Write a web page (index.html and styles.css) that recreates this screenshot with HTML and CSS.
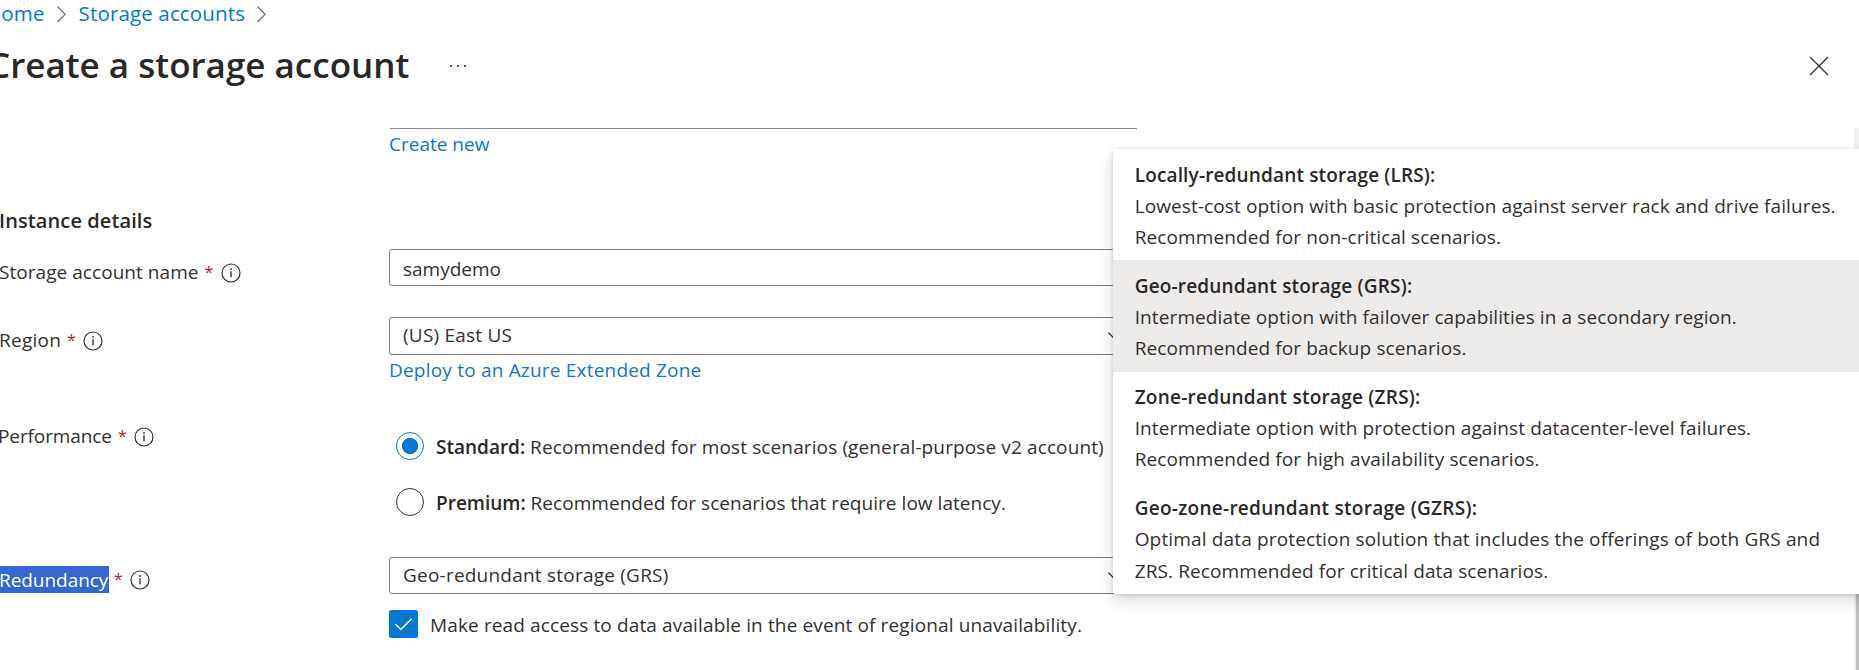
FILE: index.html
```
<!DOCTYPE html>
<html lang="en">
<head>
<meta charset="utf-8">
<title>Create a storage account</title>
<link rel="stylesheet" href="styles.css">
</head>
<body>
<svg class="defs" aria-hidden="true">
  <symbol id="info" viewBox="0 0 20 20"><circle cx="10" cy="10" r="9" fill="none" stroke="currentColor" stroke-width="1.2"/><path d="M10 8.2V14.2" stroke="currentColor" stroke-width="1.4"/><circle cx="10" cy="6" r=".9" fill="currentColor"/></symbol>
  <symbol id="sep" viewBox="0 0 9 17"><path d="M.6.6 8 8.3.6 16" fill="none" stroke="currentColor" stroke-width="1.1"/></symbol>
  <symbol id="down" viewBox="0 0 14 8"><path d="M.5.8 7 7.2 13.5.8" fill="none" stroke="currentColor" stroke-width="1.2"/></symbol>
</svg>
<div class="page">
  <header class="header">
    <nav class="crumbs">
      <a class="crumb home">Home</a>
      <svg class="sep"><use href="#sep"/></svg>
      <a class="crumb">Storage accounts</a>
      <svg class="sep"><use href="#sep"/></svg>
    </nav>
    <div class="title-row">
      <h1 class="title">Create a storage account</h1>
      <svg class="more" viewBox="0 0 18 4"><circle cx="2" cy="2" r="1.1"/><circle cx="9" cy="2" r="1.1"/><circle cx="16" cy="2" r="1.1"/></svg>
      <svg class="close" viewBox="0 0 20 20"><path d="M1 1 19 19M19 1 1 19"/></svg>
    </div>
  </header>
  <main class="form">
    <div class="row row-group"><div class="group-end"><a class="link">Create new</a></div></div>
    <h2 class="section">Instance details</h2>
    <div class="row row-name">
      <div class="label"><span class="label-text wide">Storage account name</span><span class="req">*</span><svg class="info"><use href="#info"/></svg></div>
      <div class="box input">samydemo</div>
    </div>
    <div class="row row-region">
      <div class="label"><span class="label-text region">Region</span><span class="req">*</span><svg class="info"><use href="#info"/></svg></div>
      <div class="field">
        <div class="box select"><span>(US) East US</span><svg class="down"><use href="#down"/></svg></div>
        <a class="link deploy">Deploy to an Azure Extended Zone</a>
      </div>
    </div>
    <div class="row row-perf">
      <div class="label"><span class="label-text perf">Performance</span><span class="req">*</span><svg class="info"><use href="#info"/></svg></div>
      <div class="radios">
        <div class="radio"><span class="dot on"></span><span class="radio-text"><b>Standard:</b> <span class="standard">Recommended for most scenarios (general-purpose v2 account)</span></span></div>
        <div class="radio"><span class="dot"></span><span class="radio-text"><b>Premium:</b> <span class="premium">Recommended for scenarios that require low latency.</span></span></div>
      </div>
    </div>
    <div class="row row-red">
      <div class="label"><span class="label-text selected">Redundancy</span><span class="req">*</span><svg class="info"><use href="#info"/></svg></div>
      <div class="field">
        <div class="box select short"><span>Geo-redundant storage (GRS)</span><svg class="down"><use href="#down"/></svg></div>
        <div class="check"><svg class="checkbox" viewBox="0 0 29 28"><rect width="29" height="28" rx="2.5"/><path d="M6.5 14.3 11.8 19.5 22.5 8.9"/></svg><span>Make read access to data available in the event of regional unavailability.</span></div>
      </div>
    </div>
  </main>
  <div class="scroll"><div class="thumb"></div></div>
  <div class="menu">
    <div class="item"><b class="t1">Locally-redundant storage (LRS):</b><span>Lowest-cost option with basic protection against server rack and drive failures.</span><span>Recommended for non-critical scenarios.</span></div>
    <div class="item active"><b class="t2">Geo-redundant storage (GRS):</b><span>Intermediate option with failover capabilities in a secondary region.</span><span>Recommended for backup scenarios.</span></div>
    <div class="item"><b class="t3">Zone-redundant storage (ZRS):</b><span>Intermediate option with protection against datacenter-level failures.</span><span>Recommended for high availability scenarios.</span></div>
    <div class="item"><b class="t4">Geo-zone-redundant storage (GZRS):</b><span class="optimal">Optimal data protection solution that includes the offerings of both GRS and</span><span>ZRS. Recommended for critical data scenarios.</span></div>
  </div>
</div>
</body>
</html>
```
FILE: styles.css
```
* { box-sizing: border-box; }
body { margin: 0; background: #fff; color: #323130; font: 19px/26px "Open Sans", "Noto Sans", sans-serif; }
b { font-weight: 600; color: #292827; }
.defs { position: absolute; width: 0; height: 0; }
.page { position: relative; height: 670px; overflow: hidden; }

.header { height: 128px; overflow: hidden; }
.crumbs { display: flex; align-items: center; height: 28px; color: #605e5c; }
.crumb { color: #0078d4; font-size: 20.5px; letter-spacing: .15px; line-height: 28px; margin-top: -2px; }
.home { margin-left: -14px; }
.sep { width: 9px; height: 17px; margin: 0 13px; }
.crumb + .sep { margin-left: 12px; }
.title-row { display: flex; align-items: center; height: 75px; padding-right: 30px; }
.title { margin: -2px 0 0 -12px; font-size: 35px; line-height: 48px; font-weight: 600; color: #292827; white-space: nowrap; }
.more { width: 18px; height: 4px; margin-left: 40px; fill: #323130; }
.close { width: 20px; height: 20px; margin-left: auto; stroke: #323130; stroke-width: 1.3; }

.form { display: flex; flex-direction: column; }
.row { display: grid; grid-template-columns: 389px 748px; align-items: start; white-space: nowrap; }
.row-group { height: 79px; }
.group-end { grid-column: 2; margin-left: 1px; border-top: 1px solid #8a8886; padding-top: 2px; }
.group-end .link { margin-left: -1px; }
.link { color: #1374d0; }
.section { margin: 0; height: 42px; padding-top: 1px; font-size: 20px; line-height: 26px; font-weight: 600; color: #292827; letter-spacing: .1px; margin-left: -1px; }
.row-name { height: 68px; }
.row-region { height: 106px; }
.row-perf { height: 134px; }
.row-red { height: 113px; }

.label { display: flex; align-items: center; margin-left: -1px; }
.row-name .label { padding-top: 10px; }
.row-region .label { padding-top: 10px; }
.row-red .label { padding-top: 8px; }
.wide { letter-spacing: .05px; }
.region { letter-spacing: .25px; }
.perf { margin-left: -1px; letter-spacing: -.1px; }
.req { color: #a4262c; width: 8px; margin-left: 6px; font-size: 16px; }
.info { width: 20px; height: 20px; margin: 1px 0 0 8px; }
.selected { background: #3367d1; color: #fff; line-height: 27px; width: 110px; overflow: visible; margin-right: -1px; padding-top: 1px; height: 27px; margin-top: 1px; letter-spacing: -.05px; }

.box { height: 37px; border: 1px solid #7f7d7b; border-radius: 3px; padding-left: 13px; line-height: 35px; }
.input { line-height: 38px; }
.select { display: flex; justify-content: space-between; height: 38px; line-height: 33px; letter-spacing: .22px; align-items: center; padding-right: 14px; }
.select span { margin-top: -2px; }
.short { height: 37px; }
.short span { margin-top: 0; }
.down { width: 14px; height: 8px; }
.deploy { display: block; letter-spacing: .2px; padding-top: 2px; }

.radios { padding: 9px 0 0 7px; }
.radio { display: flex; align-items: center; height: 28px; margin-bottom: 28px; }
.dot { width: 28px; height: 28px; border: 1px solid #323130; border-radius: 50%; }
.on { border-color: #0078d4; background: radial-gradient(circle, #0078d4 7.7px, #fff 8.5px); }
.radio-text { margin: 1px 0 0 12px; }
.standard { letter-spacing: .12px; }
.premium { letter-spacing: .04px; }
.check { display: flex; align-items: center; margin-top: 16px; gap: 12px; letter-spacing: .13px; }
.check span { padding-top: 2px; }
.checkbox { width: 29px; height: 28px; fill: #0078d4; }
.checkbox path { fill: none; stroke: #fff; stroke-width: 1.5; }

.scroll { position: absolute; right: 0; top: 128px; width: 5px; height: 542px; background: #f1f1f1; padding-left: 2px; }
.thumb { height: 442px; margin-top: 100px; background: #c1c1c1; }
.menu { position: absolute; left: 1113px; top: 149px; width: 760px; height: 445px; background: #fff; border-radius: 2px; box-shadow: 0 7px 16px rgba(0,0,0,.15), 0 1px 4px rgba(0,0,0,.13); }
.item { display: flex; flex-direction: column; height: 111.25px; padding: 10.5px 0 0 21.7px; line-height: 31.2px; letter-spacing: .105px; white-space: nowrap; }
.active { background: #edebe9; }
.t1 { letter-spacing: .15px; }
.t2 { letter-spacing: .18px; }
.t3 { letter-spacing: .24px; }
.t4 { letter-spacing: .27px; }
.optimal { letter-spacing: .15px; }
```
